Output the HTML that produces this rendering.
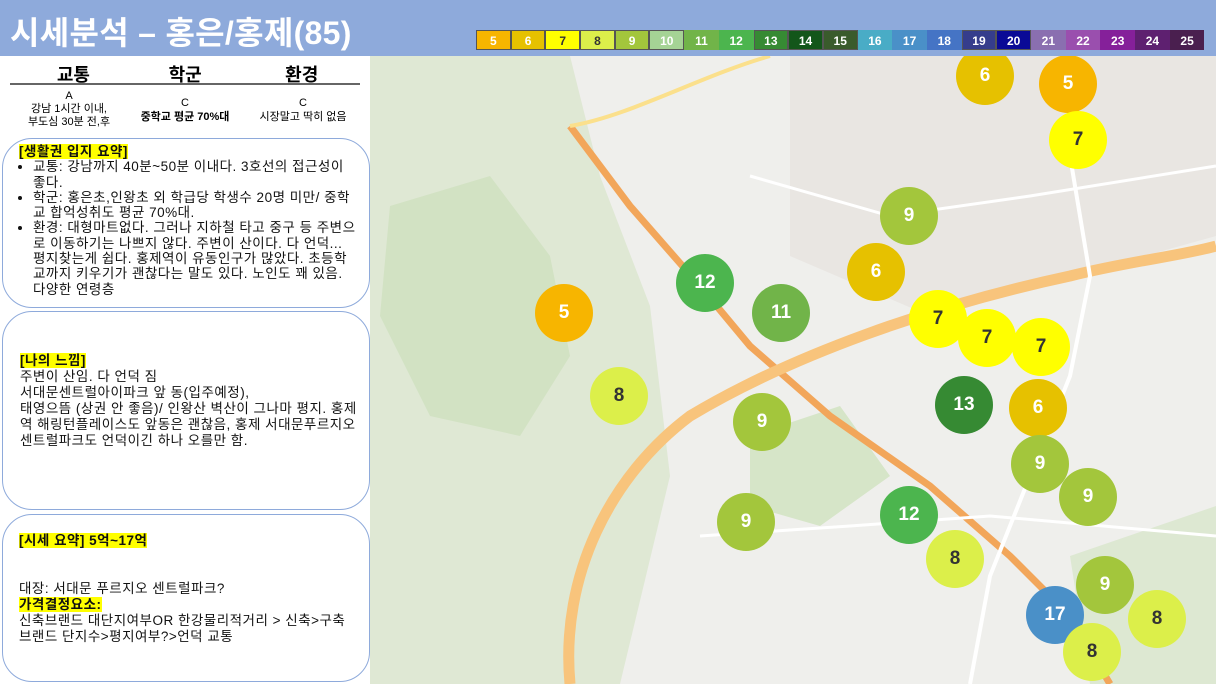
<!DOCTYPE html>
<html><head><meta charset="utf-8"><style>
*{margin:0;padding:0;box-sizing:border-box}
body{width:1216px;height:684px;overflow:hidden;background:#fff;font-family:"Liberation Sans","Noto Sans CJK KR",sans-serif;position:relative}
.hdr{position:absolute;left:0;top:0;width:1216px;height:56px;background:#8eaadb}
.title{position:absolute;left:10px;top:8px;color:#fff;font-size:32px;font-weight:bold;letter-spacing:0.3px}
.leg{position:absolute;left:476px;top:30px;display:flex;height:20px}
.leg div{width:34.7px;height:20px;color:#fff;font-size:12px;font-weight:bold;text-align:center;line-height:20px;border:1px solid #555}
.map{position:absolute;left:370px;top:56px;width:846px;height:628px;background:#efefec;overflow:hidden}
.c{position:absolute;width:58px;height:58px;border-radius:50%;color:#fff;font-size:19px;font-weight:bold;text-align:center;line-height:58px;transform:translate(-29px,-29px)}
.box{position:absolute;left:2px;width:368px;border:1.5px solid #8eaadb;border-radius:30px;background:#fff;font-size:13.5px;line-height:16px;color:#111;letter-spacing:0.5px}
.hl{background:#ffff00;font-weight:bold}
ul{padding-left:28px}
</style></head><body>
<div class="hdr"><div class="title">시세분석 – 홍은/홍제(85)</div>
<div class="leg">
<div style="background:#f7b500">5</div><div style="background:#e6c100">6</div><div style="background:#ffff00;color:#333">7</div><div style="background:#dcef4a;color:#333">8</div><div style="background:#a3c63c">9</div><div style="background:#a5d395">10</div><div style="background:#71b449;border-color:#71b449">11</div><div style="background:#4cb54e;border-color:#4cb54e">12</div><div style="background:#368a33">13</div><div style="background:#13561a">14</div><div style="background:#3a5b2c">15</div><div style="background:#49acc6;border-color:#49acc6">16</div><div style="background:#4a90c8;border-color:#4a90c8">17</div><div style="background:#4574c5;border-color:#4574c5">18</div><div style="background:#353d8c">19</div><div style="background:#0a0a96">20</div><div style="background:#8a6fb0;border-color:#8a6fb0">21</div><div style="background:#9a4fae;border-color:#9a4fae">22</div><div style="background:#85209a;border-color:#85209a">23</div><div style="background:#5e2070;border-color:#5e2070">24</div><div style="background:#4a1f4f;border-color:#4a1f4f">25</div>
</div></div>

<div style="position:absolute;left:10px;top:61px;width:350px;height:24px;border-bottom:2px solid #666;font-size:18px;font-weight:bold;display:flex">
<div style="width:120px;text-align:center;padding-left:10px">교통</div><div style="width:120px;text-align:center">학군</div><div style="width:120px;text-align:center">환경</div></div>
<div style="position:absolute;left:12px;top:90px;width:114px;text-align:center;font-size:11px;line-height:13px">A<br>강남 1시간 이내,<br>부도심 30분 전,후</div>
<div style="position:absolute;left:126px;top:96px;width:118px;text-align:center;font-size:11px;line-height:14px">C<br><b>중학교 평균 70%대</b></div>
<div style="position:absolute;left:246px;top:96px;width:114px;text-align:center;font-size:11px;line-height:14px">C<br>시장말고 딱히 없음</div>

<div class="box" style="top:138px;height:170px;padding:5px 10px 0 16px;line-height:15.3px">
<span class="hl">[생활권 입지 요약]</span>
<ul style="padding-left:18px;margin-left:-4px">
<li>교통: 강남까지 40분~50분 이내다. 3호선의 접근성이 좋다.</li>
<li>학군: 홍은초,인왕초 외 학급당 학생수 20명 미만/ 중학교 합억성취도 평균 70%대.</li>
<li>환경: 대형마트없다. 그러나 지하철 타고 중구 등 주변으로 이동하기는 나쁘지 않다. 주변이 산이다. 다 언덕... 평지찾는게 쉽다. 홍제역이 유동인구가 많았다. 초등학교까지 키우기가 괜찮다는 말도 있다. 노인도 꽤 있음. 다양한 연령층</li>
</ul></div>

<div class="box" style="top:311px;height:199px;padding:41px 10px 0 17px">
<span class="hl">[나의 느낌]</span><br>주변이 산임. 다 언덕 짐<br>서대문센트럴아이파크 앞 동(입주예정),<br>태영으뜸 (상권 안 좋음)/ 인왕산 벽산이 그나마 평지. 홍제역 해링턴플레이스도 앞동은 괜찮음, 홍제 서대문푸르지오 센트럴파크도 언덕이긴 하나 오를만 함.
</div>

<div class="box" style="top:514px;height:168px;padding:18px 10px 0 16px">
<span class="hl">[시세 요약] 5억~17억</span><br><br><br>대장: 서대문 푸르지오 센트럴파크?<br><span class="hl">가격결정요소:</span><br>신축브랜드 대단지여부OR 한강물리적거리 &gt; 신축&gt;구축 브랜드 단지수&gt;평지여부?&gt;언덕 교통
</div>

<div class="map">
<svg width="846" height="628" style="position:absolute;left:0;top:0">
<path d="M0 0 L200 0 L230 120 L280 250 L300 420 L250 628 L0 628Z" fill="#dfe8d4"/>
<path d="M20 150 L120 120 L180 200 L200 300 L150 380 L60 360 L10 260Z" fill="#d2e2c3"/>
<path d="M380 380 L470 350 L520 420 L450 470 L380 450Z" fill="#d6e5c8"/>
<path d="M700 500 L846 450 L846 628 L720 628Z" fill="#dde8d2"/>
<path d="M420 0 L846 0 L846 180 L560 260 L420 200Z" fill="#e9e6e2"/>
<path d="M200 70 L260 150 L330 230 L380 290 L460 360 L560 430 L640 500 L700 560 L740 628" stroke="#f2a65a" stroke-width="7" fill="none"/>
<path d="M200 628 C190 520 240 420 320 360 C420 300 560 250 700 220 C760 205 810 200 846 190" stroke="#f8c47c" stroke-width="11" fill="none"/>
<path d="M200 70 C260 60 330 20 400 0" stroke="#fbe08c" stroke-width="4" fill="none"/>
<path d="M600 628 L620 520 L660 420 L700 320 L720 220 L700 100" stroke="#fff" stroke-width="4" fill="none"/>
<path d="M380 120 L520 160 L660 140 L846 110" stroke="#fff" stroke-width="3" fill="none"/>
<path d="M330 480 L480 470 L620 460 L846 480" stroke="#fff" stroke-width="3" fill="none"/>
</svg>
<div class="c" style="left:615px;top:20px;background:#e6c100">6</div>
<div class="c" style="left:698px;top:28px;background:#f7b500">5</div>
<div class="c" style="left:708px;top:84px;background:#ffff00;color:#333">7</div>
<div class="c" style="left:539px;top:160px;background:#a3c63c">9</div>
<div class="c" style="left:506px;top:216px;background:#e6c100">6</div>
<div class="c" style="left:335px;top:227px;background:#4cb54e">12</div>
<div class="c" style="left:411px;top:257px;background:#71b449">11</div>
<div class="c" style="left:194px;top:257px;background:#f7b500">5</div>
<div class="c" style="left:568px;top:263px;background:#ffff00;color:#333">7</div>
<div class="c" style="left:617px;top:282px;background:#ffff00;color:#333">7</div>
<div class="c" style="left:671px;top:291px;background:#ffff00;color:#333">7</div>
<div class="c" style="left:249px;top:340px;background:#dcef4a;color:#333">8</div>
<div class="c" style="left:392px;top:366px;background:#a3c63c">9</div>
<div class="c" style="left:594px;top:349px;background:#368a33">13</div>
<div class="c" style="left:668px;top:352px;background:#e6c100">6</div>
<div class="c" style="left:670px;top:408px;background:#a3c63c">9</div>
<div class="c" style="left:718px;top:441px;background:#a3c63c">9</div>
<div class="c" style="left:539px;top:459px;background:#4cb54e">12</div>
<div class="c" style="left:376px;top:466px;background:#a3c63c">9</div>
<div class="c" style="left:585px;top:503px;background:#dcef4a;color:#333">8</div>
<div class="c" style="left:735px;top:529px;background:#a3c63c">9</div>
<div class="c" style="left:685px;top:559px;background:#4a90c8">17</div>
<div class="c" style="left:787px;top:563px;background:#dcef4a;color:#333">8</div>
<div class="c" style="left:722px;top:596px;background:#dcef4a;color:#333">8</div>
</div>
</body></html>
